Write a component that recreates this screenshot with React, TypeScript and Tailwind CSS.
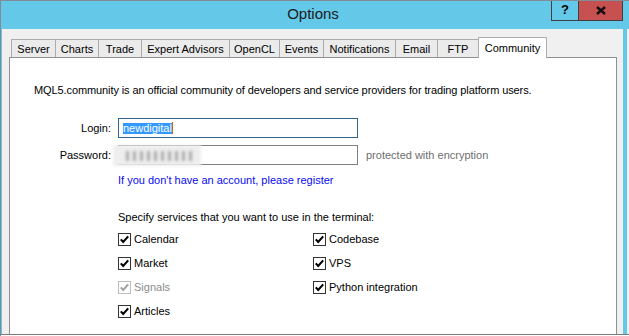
import React from "react";

const tabs = [
  { label: "Server", cls: "w-[45px]" },
  { label: "Charts", cls: "w-[44px] -ml-px" },
  { label: "Trade", cls: "w-[44px] -ml-px" },
  { label: "Expert Advisors", cls: "w-[89px] -ml-px" },
  { label: "OpenCL", cls: "w-[51px] -ml-px" },
  { label: "Events", cls: "w-[45px] -ml-px" },
  { label: "Notifications", cls: "w-[73px] -ml-px" },
  { label: "Email", cls: "w-[43px] -ml-px" },
  { label: "FTP", cls: "w-[42px] -ml-px" },
];

function Check({ label, disabled }: { label: string; disabled?: boolean }) {
  return (
    <div className="flex items-center h-[24px] gap-[3px]">
      <svg width="13" height="13" viewBox="0 0 13 13" className="shrink-0">
        <rect x="0.5" y="0.5" width="12" height="12" fill="#fff" stroke={disabled ? "#bdbdbd" : "#333"} />
        <path d="M2.8 6.4 L5.2 9 L10.2 3.4" fill="none" stroke={disabled ? "#a3a3a3" : "#000"} strokeWidth="2.1" />
      </svg>
      <span className={disabled ? "text-[#8c8c8c]" : "text-black"}>{label}</span>
    </div>
  );
}

export default function App() {
  return (
    <div className="w-[629px] h-[336px] overflow-hidden flex flex-col bg-[#64c8e9] border-t border-l border-[#7f8c95] font-['Liberation_Sans',Arial,sans-serif] text-[11px] leading-[14px] text-black">
      {/* title bar */}
      <div className="relative h-[28px] shrink-0 flex items-center justify-center pr-[4px]">
        <span className="text-[15px] text-[#1a1a1a] -mt-[2px]">Options</span>
        <div className="absolute right-[6px] top-[-1px] flex border-x border-b border-[#404040]">
          <div className="w-[27px] h-[20px] border-r border-[#404040] flex items-center justify-center font-bold text-[13px] text-black">
            ?
          </div>
          <div className="w-[43px] h-[20px] bg-[#c75050] flex items-center justify-center">
            <svg width="10" height="9" viewBox="0 0 10 9">
              <path d="M1 1 L9 8 M9 1 L1 8" stroke="#111" strokeWidth="2.4" />
            </svg>
          </div>
        </div>
      </div>

      {/* body */}
      <div className="flex h-[305px] shrink-0">
        <div className="w-[1px]" />
        <div className="w-[621px] bg-[#f0f0f0] pl-[7px] pr-[6px] pt-[8px] flex flex-col">
          <div className="flex items-end h-[20px] ml-[2px]">
            {tabs.map((t) => (
              <div
                key={t.label}
                className={`${t.cls} h-[18px] border-t border-x border-[#acacac] bg-[#ebebeb] flex items-center justify-center text-black`}
              >
                {t.label}
              </div>
            ))}
            <div className="w-[69px] h-[21px] -ml-px -mb-px relative z-10 border-t border-x border-[#acacac] bg-white flex items-center justify-center pb-[1px]">
              Community
            </div>
          </div>

          <div className="flex-1 border-t border-x border-[#8e8f94] bg-white pl-[24px] flex flex-col">
            <p className="mt-[25px] tracking-[-0.1px]">
              MQL5.community is an official community of developers and service providers for trading platform users.
            </p>

            <div className="flex items-center mt-[21px]">
              <span className="w-[77px] text-right">Login:</span>
              <div className="ml-[7px] w-[240px] h-[20px] border border-[#33648f] bg-white flex items-center pl-[4px]">
                <span className="bg-[#3399ff] text-white leading-[11px] h-[11px] inline-block">newdigital</span>
                <span className="w-px h-[12px] bg-[#c4651c]" />
              </div>
            </div>

            <div className="flex items-center mt-[7px]">
              <span className="w-[77px] text-right">Password:</span>
              <div className="relative ml-[7px] w-[240px] h-[20px] border border-[#808080] bg-white">
                <div className="absolute left-[-6px] top-[-1px] w-[88px] h-[21px] bg-[#eeeeee] blur-[1.5px] flex items-center gap-[4px] pl-[13px]">
                  {Array.from({ length: 10 }).map((_, i) => (
                    <span key={i} className="w-[3px] h-[10px] bg-[#a9a9a9]" />
                  ))}
                </div>
              </div>
              <span className="ml-[8px] text-[#6e6e6e]">protected with encryption</span>
            </div>

            <div className="ml-[84px] mt-[8px] flex flex-col">
              <span className="text-[#0a0af2]">If you don't have an account, please register</span>
              <span className="mt-[23px]">Specify services that you want to use in the terminal:</span>
              <div className="mt-[3px] grid grid-cols-[195px_auto]">
                <Check label="Calendar" />
                <Check label="Codebase" />
                <Check label="Market" />
                <Check label="VPS" />
                <Check label="Signals" disabled />
                <Check label="Python integration" />
                <Check label="Articles" />
              </div>
            </div>
          </div>
        </div>
        <div className="w-[4px]" />
        <div className="w-[2px] bg-[#eef0f1]" />
      </div>
      <div className="h-px shrink-0 bg-[#7a7a7a]" />
      <div className="h-px shrink-0 bg-white" />
    </div>
  );
}
